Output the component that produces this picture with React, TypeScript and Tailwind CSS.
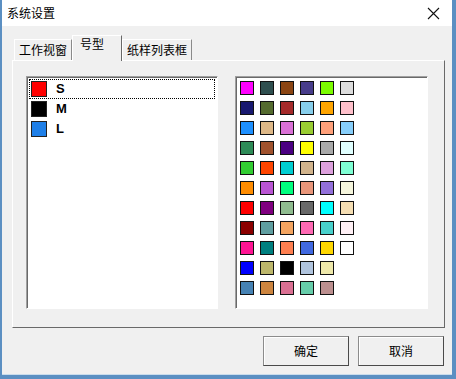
import React from 'react'

const colors = [
  '#ff00ff', '#2f4f4f', '#8b4513', '#483d8b', '#7cfc00', '#dcdcdc',
  '#191970', '#556b2f', '#a52a2a', '#87ceeb', '#ffa500', '#ffc0cb',
  '#1e90ff', '#deb887', '#da70d6', '#9acd32', '#ffa07a', '#87cefa',
  '#2e8b57', '#a0522d', '#4b0082', '#ffff00', '#a9a9a9', '#e0ffff',
  '#32cd32', '#ff4500', '#00ced1', '#d2b48c', '#dda0dd', '#7fffd4',
  '#ff8c00', '#ba55d3', '#00ff7f', '#e9967a', '#9370db', '#f5f5dc',
  '#ff0000', '#800080', '#8fbc8f', '#696969', '#00ffff', '#f5deb3',
  '#8b0000', '#5f9ea0', '#f4a460', '#ff69b4', '#48d1cc', '#fff0f5',
  '#ff1493', '#008080', '#ff7f50', '#4169e1', '#ffd700', '#ffffff',
  '#0000ff', '#bdb76b', '#000000', '#b0c4de', '#eee8aa', '',
  '#4682b4', '#cd853f', '#db7093', '#66cdaa', '#bc8f8f', '',
]

const sizes = [
  { name: 'S', color: '#ff0000' },
  { name: 'M', color: '#000000' },
  { name: 'L', color: '#1e7fe8' },
]

const cjk = "font-['Noto_Sans_CJK_SC',sans-serif]"

function Tab({ label, active }: { label: string; active?: boolean }) {
  if (active) {
    return (
      <div className="relative z-10 -mb-px h-[26px] px-[7px] bg-[#f0f0f0] border-l border-t border-white border-r border-r-[#696969] text-[12px] leading-[16px] text-black">
        <span className="block w-[34px]">{label}</span>
      </div>
    )
  }
  return (
    <div className="h-[21px] px-[4px] pt-[2px] border-l border-t border-white border-r border-r-[#8a8a8a] text-[12px] leading-[16px] text-black">
      {label}
    </div>
  )
}

export default function App() {
  return (
    <div className={`w-[456px] h-[379px] bg-[#5b8fc2] flex ${cjk}`}>
      <div className="flex-1 flex flex-col ml-[2px] mr-[4px] mb-[4px] bg-[#f0f0f0] border-b border-[#c9dcec]">
        <div className="h-[26px] bg-white flex items-center pl-[5px] pr-[12px]">
          <span className="text-[12px] text-black">系统设置</span>
          <svg className="ml-auto" width="13" height="13" viewBox="0 0 13 13">
            <path d="M1 1L12 12M12 1L1 12" stroke="#111" strokeWidth="1.1" />
          </svg>
        </div>

        <div className="flex flex-col pl-[10px] pr-[7px] pt-[9px]">
          <div className="flex items-end h-[25px] pl-[2px]">
            <Tab label="工作视窗" />
            <Tab label="号型" active />
            <Tab label="纸样列表框" />
          </div>
          <div className="h-[268px] border border-white border-r-[#696969] border-b-[#696969] flex gap-[17px] pl-[13px] pt-[15px]">
            <div className="w-[192px] h-[233px] bg-white border border-[#a0a0a0] border-r-white border-b-white shadow-[inset_1px_1px_0_#696969] p-[2px]">
              {sizes.map((s, i) => (
                <div
                  key={s.name}
                  className={`h-[20px] flex items-center ${i === 0 ? 'border border-dotted border-black' : 'border border-transparent'}`}
                >
                  <div
                    className="w-[16px] h-[16px] ml-[1px] border border-[#222]"
                    style={{ backgroundColor: s.color }}
                  />
                  <span className="ml-[9px] text-[13px] font-bold font-['Liberation_Sans',sans-serif] text-black">
                    {s.name}
                  </span>
                </div>
              ))}
            </div>
            <div className="w-[193px] h-[233px] bg-white border border-[#a0a0a0] border-r-white border-b-white shadow-[inset_1px_1px_0_#696969] pl-[4px] pt-[4px]">
              <div className="grid grid-cols-[repeat(6,14px)] gap-[6px]">
                {colors.map((c, i) =>
                  c ? (
                    <div
                      key={i}
                      className="w-[14px] h-[14px] border border-[#111]"
                      style={{ backgroundColor: c }}
                    />
                  ) : (
                    <div key={i} className="w-[14px] h-[14px]" />
                  )
                )}
              </div>
            </div>
          </div>
        </div>

        <div className="flex justify-end gap-[9px] pr-[8px] pt-[8px]">
          <button className="w-[86px] h-[30px] bg-[#f0f0f0] border border-[#8c8c8c] border-r-[#4a4a4a] border-b-[#4a4a4a] shadow-[inset_1px_1px_0_#fff] text-[12px] text-black">
            确定
          </button>
          <button className="w-[86px] h-[30px] bg-[#f0f0f0] border border-[#8c8c8c] border-r-[#4a4a4a] border-b-[#4a4a4a] shadow-[inset_1px_1px_0_#fff] text-[12px] text-black">
            取消
          </button>
        </div>
      </div>
    </div>
  )
}
